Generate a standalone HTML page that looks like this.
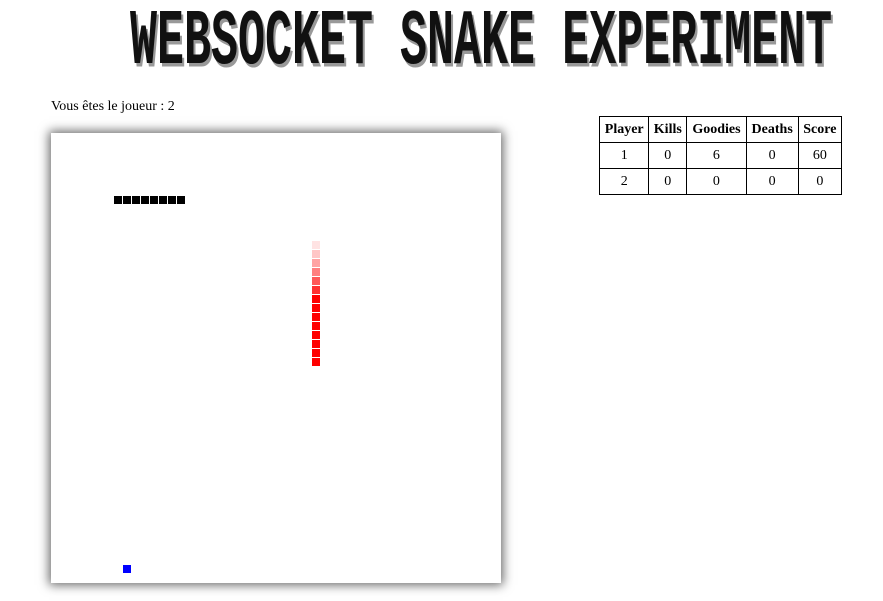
<!DOCTYPE html>
<html><head><style>
body{margin:0;width:883px;height:601px;background:#fff;position:relative;font-family:"Liberation Serif",serif;overflow:hidden}
#title{position:absolute;left:130px;top:-2px;font:bold 45px "Liberation Mono",monospace;letter-spacing:0px;transform:scaleY(1.75);transform-origin:top left;color:#111;text-shadow:2px 2px 0 #999;white-space:nowrap;width:705px}
#player{position:absolute;left:51px;top:99px;font-size:14px}
#canvas{position:absolute;left:51px;top:133px;width:450px;height:450px;background:#fff;box-shadow:0 0 10px 2px rgba(0,0,0,.6)}
.s{position:absolute;width:8px;height:8px}
table{position:absolute;left:599px;top:116px;border-collapse:collapse;font-size:14px;width:243px}
td,th{border:1px solid #000;text-align:center;height:25px;padding:0 3px}
</style></head><body>
<div id="title">WEBSOCKET SNAKE EXPERIMENT</div>
<div id="player">Vous êtes le joueur : 2</div>
<div id="canvas">
<div class="s" style="left:63px;top:63px;background:#000"></div>
<div class="s" style="left:72px;top:63px;background:#000"></div>
<div class="s" style="left:81px;top:63px;background:#000"></div>
<div class="s" style="left:90px;top:63px;background:#000"></div>
<div class="s" style="left:99px;top:63px;background:#000"></div>
<div class="s" style="left:108px;top:63px;background:#000"></div>
<div class="s" style="left:117px;top:63px;background:#000"></div>
<div class="s" style="left:126px;top:63px;background:#000"></div>
<div class="s" style="left:261px;top:108px;background:#ffe3e3"></div>
<div class="s" style="left:261px;top:117px;background:#ffc6c6"></div>
<div class="s" style="left:261px;top:126px;background:#ffa3a3"></div>
<div class="s" style="left:261px;top:135px;background:#ff7f7f"></div>
<div class="s" style="left:261px;top:144px;background:#ff5757"></div>
<div class="s" style="left:261px;top:153px;background:#ff3030"></div>
<div class="s" style="left:261px;top:162px;background:#f00"></div>
<div class="s" style="left:261px;top:171px;background:#f00"></div>
<div class="s" style="left:261px;top:180px;background:#f00"></div>
<div class="s" style="left:261px;top:189px;background:#f00"></div>
<div class="s" style="left:261px;top:198px;background:#f00"></div>
<div class="s" style="left:261px;top:207px;background:#f00"></div>
<div class="s" style="left:261px;top:216px;background:#f00"></div>
<div class="s" style="left:261px;top:225px;background:#f00"></div>
<div class="s" style="left:72px;top:432px;background:#00f"></div>
</div>
<table>
<tr><th>Player</th><th>Kills</th><th>Goodies</th><th>Deaths</th><th>Score</th></tr>
<tr><td>1</td><td>0</td><td>6</td><td>0</td><td>60</td></tr>
<tr><td>2</td><td>0</td><td>0</td><td>0</td><td>0</td></tr>
</table>
</body></html>
